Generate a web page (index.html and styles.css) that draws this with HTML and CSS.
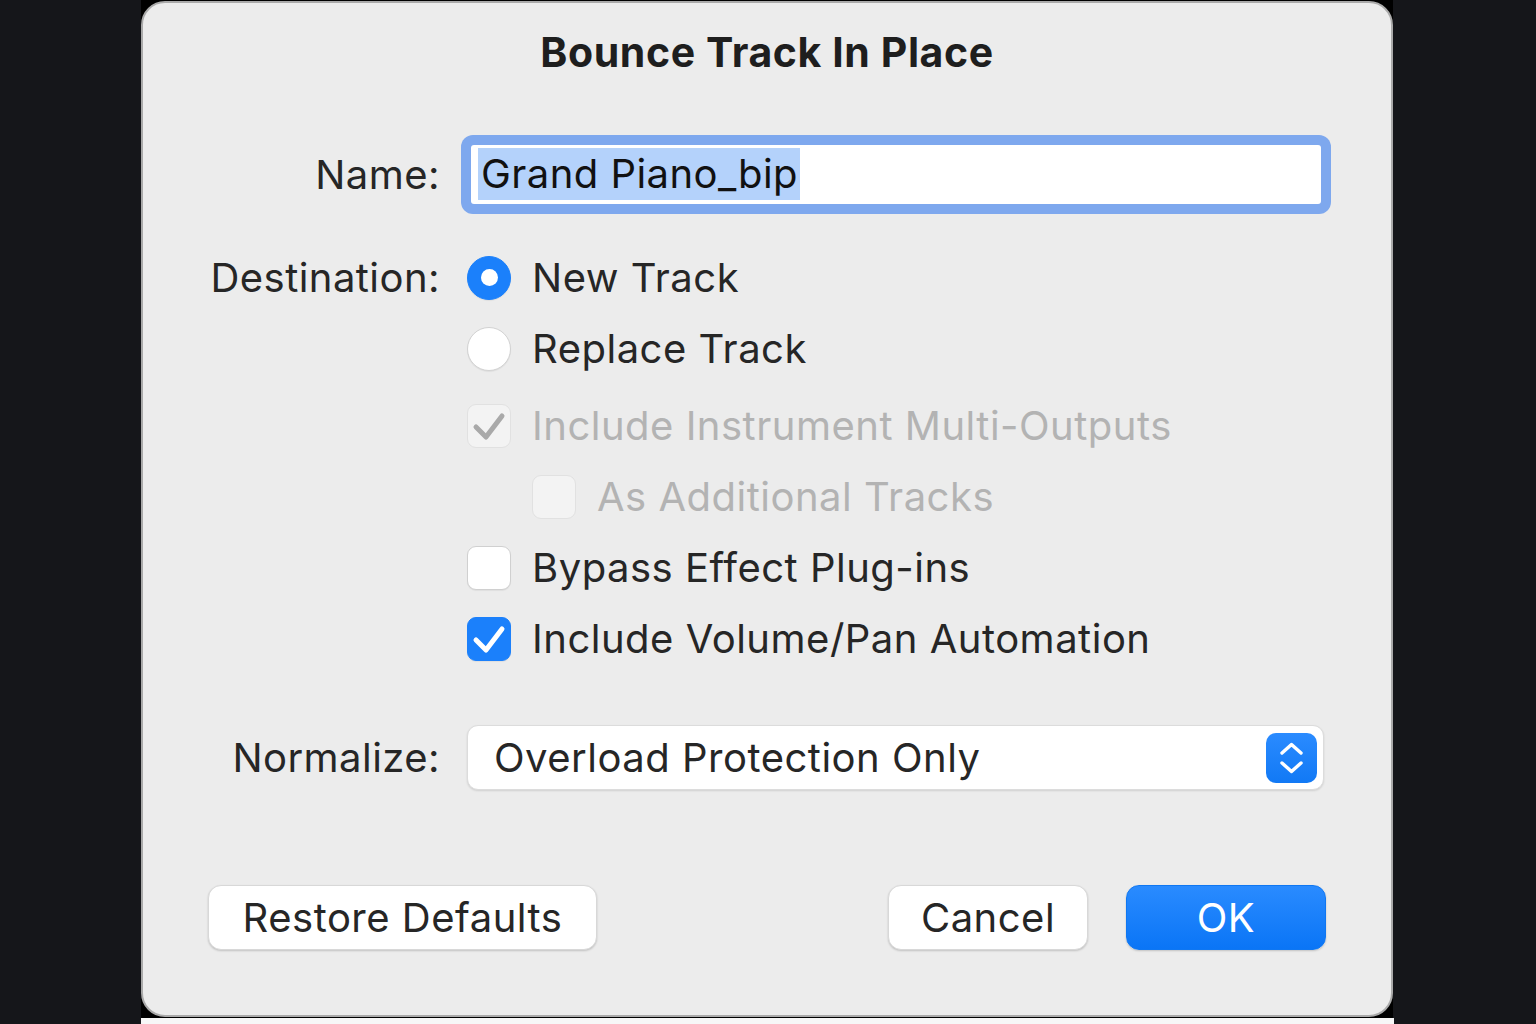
FILE: index.html
```html
<!DOCTYPE html>
<html lang="en">
<head>
<meta charset="utf-8">
<title>Bounce Track In Place</title>
<link rel="stylesheet" href="styles.css">
</head>
<body>
<div class="screen">
  <div class="frame">
    <div class="dialog">
      <h1 class="title">Bounce Track In Place</h1>
      <div class="form">
        <div class="label label-name">Name:</div>
        <div class="field-ring">
          <div class="field"><span class="sel">Grand Piano_bip</span></div>
        </div>

        <div class="label label-dest">Destination:</div>
        <div class="options">
          <div class="opt">
            <span class="radio on"><span class="dot"></span></span>
            <span class="opt-text">New Track</span>
          </div>
          <div class="opt">
            <span class="radio"></span>
            <span class="opt-text">Replace Track</span>
          </div>
          <div class="opt opt-gap disabled">
            <span class="check dis-on">
              <svg viewBox="0 0 42 42" width="42" height="42"><path d="M8 22 L18 32 L34 11" fill="none" stroke="#a9a9a9" stroke-width="5" stroke-linecap="round" stroke-linejoin="round"/></svg>
            </span>
            <span class="opt-text">Include Instrument Multi-Outputs</span>
          </div>
          <div class="opt indent disabled">
            <span class="check dis-off"></span>
            <span class="opt-text">As Additional Tracks</span>
          </div>
          <div class="opt">
            <span class="check"></span>
            <span class="opt-text">Bypass Effect Plug-ins</span>
          </div>
          <div class="opt">
            <span class="check on">
              <svg viewBox="0 0 42 42" width="42" height="42"><path d="M8 22 L18 32 L34 11" fill="none" stroke="#ffffff" stroke-width="5" stroke-linecap="round" stroke-linejoin="round"/></svg>
            </span>
            <span class="opt-text">Include Volume/Pan Automation</span>
          </div>
        </div>

        <div class="label label-norm">Normalize:</div>
        <div class="popup">
          <span class="popup-text">Overload Protection Only</span>
          <span class="stepper">
            <svg viewBox="0 0 51 50" width="51" height="50"><path d="M16 20 L25.5 11.5 L35 20 M16 30 L25.5 38.5 L35 30" fill="none" stroke="#ffffff" stroke-width="3.4" stroke-linecap="round" stroke-linejoin="round"/></svg>
          </span>
        </div>
      </div>
      <div class="buttons">
        <button class="btn btn-restore">Restore Defaults</button>
        <span class="spacer"></span>
        <button class="btn btn-cancel">Cancel</button>
        <button class="btn btn-ok">OK</button>
      </div>
    </div>
  </div>
  <div class="strip"></div>
</div>
</body>
</html>
```
FILE: styles.css
```css
* { box-sizing: border-box; }
html, body { margin: 0; padding: 0; }
body {
  background: #15161a;
  font-family: Inter, "Noto Sans", "Liberation Sans", sans-serif;
  color: #262626;
  width: 1536px;
  height: 1024px;
  overflow: hidden;
}
.screen {
  display: flex;
  flex-direction: column;
  padding-left: 141px;
  width: 1536px;
  height: 1024px;
}
.frame {
  width: 1252px;
  height: 1018px;
  background: #000;
  padding: 1px 0 1px 0;
}
.dialog {
  height: 100%;
  background: #ececec;
  border: 2px solid #aaaaaa;
  border-radius: 24px;
  display: flex;
  flex-direction: column;
}
.strip {
  width: 1253px;
  height: 6px;
  background: #f7f7f7;
}
.title {
  margin: 24px 0 0 0;
  height: 50px;
  line-height: 50px;
  text-align: center;
  font-size: 41px;
  font-weight: 700;
  color: #1e1e1e;
  letter-spacing: 0.6px;
}
.form {
  margin-top: 58px;
  display: grid;
  grid-template-columns: 297px 1fr;
  column-gap: 21px;
  padding-right: 60px;
  align-items: start;
}
.label {
  text-align: right;
  font-size: 40px;
  letter-spacing: 0.45px;
  color: #262626;
}
.label-name { height: 79px; line-height: 79px; }
.label-dest { margin-top: 28px; height: 71px; line-height: 71px; }
.label-norm { margin-top: 51px; height: 65px; line-height: 65px; }

.field-ring {
  height: 79px;
  background: #7ea8ee;
  border-radius: 12px;
  padding: 10px 10px 10px 10px;
}
.field {
  height: 100%;
  background: #fff;
  border-radius: 3px;
  padding: 3px 0 0 7px;
  font-size: 40px;
  letter-spacing: 0.45px;
  color: #111;
}
.sel {
  display: inline-block;
  height: 52px;
  line-height: 52px;
  padding: 0 2px 0 3px;
  background: #b4d2fb;
}

.options {
  margin-top: 28px;
  padding-left: 6px;
  display: flex;
  flex-direction: column;
}
.opt {
  height: 71px;
  display: flex;
  align-items: center;
  gap: 21px;
  font-size: 40px;
  letter-spacing: 0.5px;
  color: #262626;
}
.opt-gap { margin-top: 6px; }
.indent { padding-left: 65px; }
.disabled .opt-text { color: #b3b3b3; }

.radio {
  width: 44px;
  height: 44px;
  border-radius: 50%;
  background: #fff;
  border: 1px solid #d2d2d2;
  box-shadow: 0 1px 1px rgba(0,0,0,0.06);
  display: flex;
  align-items: center;
  justify-content: center;
  flex: none;
}
.radio.on {
  background: #1b80fb;
  border-color: #1b80fb;
}
.dot {
  width: 17px;
  height: 17px;
  border-radius: 50%;
  background: #fff;
}
.check {
  width: 44px;
  height: 44px;
  border-radius: 9px;
  background: #fff;
  border: 1px solid #d0d0d0;
  box-shadow: 0 1px 1px rgba(0,0,0,0.06);
  flex: none;
  display: flex;
  align-items: center;
  justify-content: center;
}
.check svg { display: block; }
.check.on {
  background: #1b80fb;
  border-color: #1b80fb;
}
.check.dis-on, .check.dis-off {
  background: #f3f3f3;
  border-color: #e1e1e1;
  box-shadow: none;
}

.popup {
  margin: 51px 7px 0 6px;
  height: 65px;
  background: #fff;
  border-radius: 11px;
  border: 1px solid #dcdcdc;
  box-shadow: 0 1px 2px rgba(0,0,0,0.12);
  display: flex;
  align-items: center;
  padding: 0 6px 0 26px;
}
.popup-text {
  flex: 1;
  font-size: 40px;
  letter-spacing: 0.5px;
  color: #262626;
}
.stepper {
  width: 51px;
  height: 50px;
  border-radius: 10px;
  background: linear-gradient(#2a8bff, #1179f5);
  display: block;
}
.stepper svg { display: block; }

.buttons {
  margin-top: 95px;
  padding: 0 65px;
  display: flex;
  align-items: center;
}
.spacer { flex: 1; }
.btn {
  height: 65px;
  border: 1px solid #d8d8d8;
  border-radius: 13px;
  background: #fff;
  box-shadow: 0 1px 2px rgba(0,0,0,0.18);
  font-family: Inter, "Noto Sans", "Liberation Sans", sans-serif;
  font-size: 40px;
  letter-spacing: 0.5px;
  color: #262626;
  padding: 0;
  line-height: 1;
}
.btn-restore { width: 389px; }
.btn-cancel { width: 200px; margin-right: 38px; }
.btn-ok {
  width: 200px;
  background: linear-gradient(#2a8bff, #0a75f6);
  border-color: #0f77f2;
  color: #fff;
}
```
